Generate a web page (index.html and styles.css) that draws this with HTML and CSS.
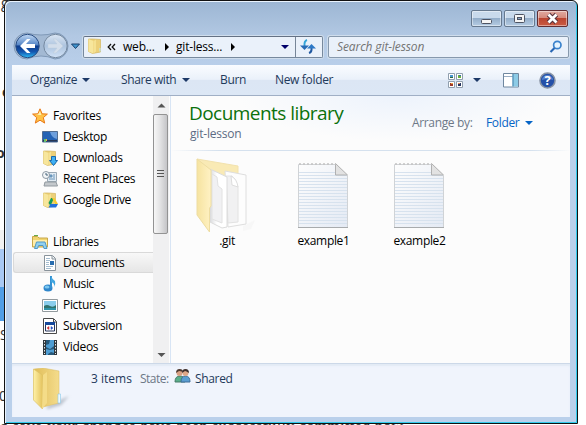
FILE: index.html
```html
<!DOCTYPE html>
<html lang="en">
<head>
<meta charset="utf-8">
<title>git-lesson</title>
<link rel="stylesheet" href="styles.css">
</head>
<body>
<div class="backdrop" aria-hidden="true">
  <span class="frag f1">g</span><span class="frag f2">o</span><span class="frag f3">o</span>
  <span class="sel s0"></span><span class="sel s1"></span><span class="sel s2"></span>
  <span class="frag f4">S</span><span class="frag f5">0</span>
  <span class="frag f6">g save your changes have been successfully committed now</span>
</div>
<main class="window">
  <div class="titlebar">
    <button class="cap" aria-label="Minimize"><svg width="31" height="17"><rect x="10.5" y="9.5" width="10" height="4" rx="1" fill="#f5f5f5" stroke="#4d5362"/></svg></button>
    <button class="cap" aria-label="Maximize"><svg width="31" height="17"><rect x="10.5" y="4.5" width="10" height="8" rx="1" fill="#f5f5f5" stroke="#4d5362"/><rect x="13.5" y="7.5" width="4" height="2" fill="#8ba6c6" stroke="#4d5362"/></svg></button>
    <button class="cap close" aria-label="Close"><svg width="31" height="17"><path d="M11.5 4.5l8 8M19.5 4.5l-8 8" stroke="#55303a" stroke-width="4.8"/><path d="M11.5 4.5l8 8M19.5 4.5l-8 8" stroke="#fff" stroke-width="2.8"/></svg></button>
  </div>
  <div class="navrow">
    <svg class="travel" width="68" height="28" viewBox="0 0 68 28">
      <defs>
        <linearGradient id="bk" x2="0" y2="1"><stop stop-color="#c0d8f4"/><stop offset=".45" stop-color="#5686c6"/><stop offset=".5" stop-color="#0d3b8c"/><stop offset=".75" stop-color="#1457b0"/><stop offset="1" stop-color="#2cbcf4"/></linearGradient>
        <linearGradient id="fw" x2="0" y2="1"><stop stop-color="#dbe6f3"/><stop offset=".5" stop-color="#adc4df"/><stop offset="1" stop-color="#d1e2f6"/></linearGradient>
      </defs>
      <path d="M14 1Q28 5 42 1A13 13 0 0 1 42 27Q28 21 14 27A13 13 0 0 1 14 1Z" fill="#a3b9d3" stroke="#8099b7"/>
      <circle cx="14.5" cy="14" r="11.7" fill="url(#bk)" stroke="#294d83"/>
      <circle cx="42.5" cy="14" r="11.7" fill="url(#fw)" stroke="#74889f"/>
      <path d="M7 14l7-7h3.500l-4.500 5h9v4h-9l4.500 5h-3.500z" fill="#fff"/>
      <path d="M50 14l-7-7h-3l4 5h-9v4h9l-4 5h3z" fill="#d3deeb" stroke="#bdcddd" stroke-width=".5"/>
      <path d="M58.500 12h8l-4 4.500z" fill="#3f94ce" stroke="#1c416d"/>
    </svg>
    <div class="address">
      <svg width="16" height="18" viewBox="0 0 16 18"><use href="#folder"/></svg>
      <svg class="chev" width="9" height="8" viewBox="0 0 9 8"><path d="M4 1L1.200 4 4 7M8 1L5.200 4 8 7" fill="none" stroke="#111" stroke-width="1.300"/></svg><span class="a1">web...</span><i class="tri"></i><span class="a2">git-less...</span><i class="tri t2"></i><i class="down navy"></i>
      <span class="refresh"><svg width="18" height="16" viewBox="0 0 18 16"><path d="M8 1Q5 2 5.500 7" fill="none" stroke="#35a5d9" stroke-width="2"/><path d="M1 6.500h9l-4.500 4.500z" fill="#286bb5"/><path d="M10 14Q13 13 12.500 9" fill="none" stroke="#2159a1" stroke-width="2"/><path d="M8 9.500h9L12.500 5z" fill="#2d79c7"/></svg></span>
    </div>
    <div class="search"><span>Search git-lesson</span><svg width="14" height="14" viewBox="0 0 14 14"><circle cx="8.300" cy="5" r="3.700" fill="#e6f4ff" stroke="#3b83cc" stroke-width="1.700"/><path d="M5.500 8L1.500 12" stroke="#2867b4" stroke-width="2.200"/></svg></div>
  </div>
  <div class="client">
    <div class="toolbar">
      <span class="c1">Organize</span><i class="down"></i><span class="c2">Share with</span><i class="down"></i><span class="c3">Burn</span><span class="c4">New folder</span>
      <svg class="views" width="15" height="15" viewBox="0 0 15 15"><path d="M.5.5h6v6h-6zM8.500.5h6v6h-6zM.5 8.500h6v6h-6zM8.500 8.500h6v6h-6z" fill="#fff" stroke="#909fae"/><path d="M2 2h3v2h-3z" fill="#4795ce"/><path d="M2 4h3v1h-3z" fill="#2c653c"/><path d="M10 2h3v3h-3z" fill="#6ab13d"/><path d="M11 2h2v1h-2z" fill="#3469b0"/><path d="M2 10h3v3h-3z" fill="#9b3829"/><path d="M3 10h2v1h-2z" fill="#f4a13b"/><path d="M10 10h3v3h-3z" fill="#26345f"/><path d="M10 10h2v1h-2z" fill="#db865d"/></svg>
      <i class="down d3"></i>
      <svg class="pane" width="16" height="15" viewBox="0 0 16 15"><path d="M.5.5h15v13.500h-15z" fill="#fff" stroke="#6f879f"/><path d="M1 3.500h9" stroke="#9aaec4"/><path d="M9.500 1h5.500v12.500h-5.500z" fill="#8ccbe6"/><path d="M10 1v12.500" stroke="#4580a9"/></svg>
      <svg class="help" width="17" height="17" viewBox="0 0 17 17"><circle cx="8.500" cy="8.500" r="7.500" fill="#2450a8" stroke="#8792a3" stroke-width="1.600"/><path d="M3 8A5.500 5 0 0 1 14 8Q9 6 3 8" fill="#5381cd"/><text x="8.500" y="13" text-anchor="middle">?</text></svg>
    </div>
    <div class="body">
      <nav class="side">
        <div class="item head"><svg viewBox="0 0 16 16"><path d="M8 .8l2.100 5 5.300.3-4.100 3.500 1.400 5.500L8 12.200l-4.700 2.900 1.400-5.500L.6 6.100l5.300-.3z" fill="#ffc247" stroke="#e87818"/><path d="M8 3l1.300 4L3 7l3-.5z" fill="#fff0ac"/></svg>Favorites</div>
        <div class="item"><svg viewBox="0 0 16 16"><path d="M.5 2.500h15v10.500h-15z" fill="#2462b4" stroke="#526d91"/><path d="M8 3h7v7Q10 9 8 3" fill="#6d9fdc"/><path d="M1 11h14v1.500H1z" fill="#273652"/><path d="M2 10h2v3H2z" fill="#62c26c"/><path d="M4 10h1v2H4z" fill="#f0b34a"/></svg>Desktop</div>
        <div class="item"><svg viewBox="0 0 16 16"><use href="#folder"/><path d="M9.500 6.500h4v4h2l-4 5-4-5h2z" fill="#3fb0f4" stroke="#1768ae"/></svg>Downloads</div>
        <div class="item"><svg viewBox="0 0 16 16"><path d="M5.500 1.500h9v9h-9z" fill="#e1ebf3" stroke="#9aa9b5"/><path d="M7 4h3v2H7zM11 4h2M11 6h2M7 8h6" fill="#739dc0" stroke="#6794bb"/><path d="M3 11h11l1.500 4H2z" fill="#c3c8cc" stroke="#929aa0"/><circle cx="4" cy="4" r="3.500" fill="#f3f6f8" stroke="#8c98a3"/><path d="M4 2v2h2" fill="none" stroke="#47647d"/></svg>Recent Places</div>
        <div class="item"><svg viewBox="0 0 16 16"><use href="#folder"/><path d="M9 6h3l-3.500 8-2-3z" fill="#179d59"/><path d="M10 6h2.500l3.500 6h-3z" fill="#f6cc32"/><path d="M8.500 12h7.500l-2 3.500H6.500z" fill="#2370dc"/></svg>Google Drive</div>
        <div class="item head libs"><svg viewBox="0 0 16 16"><path d="M.5 2.500h5l1.500 1.500h8.500v9H.5z" fill="#f0d56f" stroke="#c9a84b"/><path d="M2 1.500h4" stroke="#66a94c"/><path d="M1 6h14v6H1z" fill="#ffedaa"/><path d="M4.500 8h8.500l2 6.500h-3l-1-3H6.500l-1 3H2.500z" fill="#91d0f0" stroke="#5198c6"/></svg>Libraries</div>
        <div class="item chosen"><svg viewBox="0 0 16 16"><path d="M2.500.5h8l3 3v12h-11z" fill="#fff" stroke="#88929a"/><path d="M10 1v3h3" fill="#e7edf2" stroke="#88929a"/><path d="M4 3.500h4M4 5.500h4M4 7.500h3M4 9.500h3M4 11.500h7M4 13.500h5" stroke="#a5bdd0"/><path d="M8 6h4v4H8z" fill="#276cae"/></svg>Documents</div>
        <div class="item"><svg viewBox="0 0 16 16"><ellipse cx="6" cy="12" rx="4.500" ry="3.500" fill="#2f86cb"/><path d="M9 0v12" stroke="#3291d2" stroke-width="2"/><path d="M9 0Q10 3 13 5Q14 8 12 11Q13 7 9 6z" fill="#43a6df"/><ellipse cx="5" cy="11" rx="2.500" ry="1.500" fill="#7dc7ef"/></svg>Music</div>
        <div class="item"><svg viewBox="0 0 16 16"><path d="M.5 2.500h15v12H.5z" fill="#fff" stroke="#929a9e"/><path d="M2 4h12v9H2z" fill="#8acdec"/><path d="M2 9Q5 7 8 9T14 8v5H2z" fill="#30726d"/><path d="M2 11h12v2H2z" fill="#2e93a8"/></svg>Pictures</div>
        <div class="item"><svg viewBox="0 0 16 16"><path d="M1.500.5h10l3 3v12h-13z" fill="#fff" stroke="#4a4a4a"/><path d="M11.500 1v3h3" fill="none" stroke="#4a4a4a"/><path d="M3.500 4.500h9v8.500h-9z" fill="#fff" stroke="#26345b"/><path d="M3 4h10v3H3z" fill="#17499b"/><path d="M7 8.500L5 10l2 1.500z" fill="#cb2d35" stroke="#cb2d35" stroke-width=".5"/><path d="M9 8.500l2 1.500-2 1.500z" fill="#2851be" stroke="#2851be" stroke-width=".5"/></svg>Subversion</div>
        <div class="item"><svg viewBox="0 0 16 16"><path d="M1 1h14v15H1z" fill="#30363b"/><path d="M4 1h8v15H4z" fill="#4e9dd3"/><path d="M4 1h4l-1 4-3 1zM4 8l4 2 4-3v3l-4 1-4-1zM6 15l3-2 3 1v2H6z" fill="#275879"/><path d="M2.500 2v13M13.500 2v13" stroke="#e1e9ed" stroke-dasharray="1.500 1.500"/></svg>Videos</div>
      </nav>
      <div class="scroll"><svg width="16" height="268"><path d="M4.500 11.500l4-4 4 4z" fill="#555"/><rect x=".5" y="18.500" width="14" height="119" rx="1.500" fill="url(#thumb)" stroke="#939393"/><path d="M4 74.500h7M4 77.500h7M4 80.500h7" stroke="#555"/><path d="M4.500 257l4 4 4-4z" fill="#555"/><defs><linearGradient id="thumb"><stop stop-color="#f8f8f8"/><stop offset=".45" stop-color="#e4e4e5"/><stop offset="1" stop-color="#c2c2c5"/></linearGradient></defs></svg></div>
      <section class="content">
        <header>
          <div><h1>Documents library</h1><p>git-lesson</p></div>
          <div class="arrange"><span class="g1">Arrange by:</span><span class="g2">Folder</span><i class="down blue"></i></div>
        </header>
        <div class="files">
          <figure class="dir"><svg width="62" height="78" viewBox="0 0 62 78">
            <defs><linearGradient id="flap"><stop stop-color="#f6e3a0"/><stop offset="1" stop-color="#fff2c4"/></linearGradient><linearGradient id="paper"><stop stop-color="#d9dadd"/><stop offset=".4" stop-color="#fff"/></linearGradient></defs>
            <path d="M48 71l12-6-4 9-8 2z" fill="#f7f7f7"/>
            <path d="M2 4l41 7v12H14z" fill="#f9eab5" stroke="#f2e2ae"/>
            <path d="M30 16l21 4v49l-18 3z" fill="#fdfdfd" stroke="#dedede"/><path d="M31 21h6l3 3 3 8v35l-10 1z" fill="#f1f1f2" stroke="#e2e2e2"/><path d="M36 21l1 9 6 2q-1-8-7-11z" fill="#fff" stroke="#ddd"/>
            <path d="M15 14l17 8v50l-5 1-12-6z" fill="url(#paper)" stroke="#dcdcdc"/><path d="M17 19l5 3 1 9 4 3v34l-10-4z" fill="#f1f1f3" stroke="#e2e2e2"/>
            <path d="M2 4l14 11v36l-1.500 2v24L2 60z" fill="url(#flap)" stroke="#eedda2"/>
          </svg><figcaption>.git</figcaption></figure>
          <figure><svg width="54" height="78" viewBox="0 0 54 78"><use href="#note"/></svg><figcaption>example1</figcaption></figure>
          <figure><svg width="54" height="78" viewBox="0 0 54 78"><use href="#note"/></svg><figcaption>example2</figcaption></figure>
        </div>
      </section>
    </div>
    <footer>
      <svg width="42" height="45" viewBox="0 0 42 45"><defs><linearGradient id="gold"><stop stop-color="#fff2a9"/><stop offset="1" stop-color="#e4c35e"/></linearGradient><linearGradient id="inner"><stop stop-color="#e0bd58"/><stop offset="1" stop-color="#f4dc8c"/></linearGradient><filter id="soft"><feGaussianBlur stdDeviation="1.500"/></filter></defs><path d="M15 38L37 28l-8 9-14 4z" fill="#b9c0cb" filter="url(#soft)"/><path d="M2 1l9-1 16 3v32l-16 4z" fill="url(#inner)" stroke="#d9bc62" stroke-width=".5"/><path d="M1.500 1l9 6v34L1.500 32z" fill="url(#gold)" stroke="#ddc264" stroke-width=".7"/><path d="M11 7l4-3v31l-5 6z" fill="#f4dc88"/><path d="M26 26h2.500v9H26z" fill="#eefbff" stroke="#8ac7ea" stroke-width=".6"/></svg>
      <span class="b1">3 items</span><span class="b2">State:</span>
      <svg class="people" width="17" height="16" viewBox="0 0 17 16"><path d="M1 14q0-6 5-6t5 6z" fill="#5aae8b" stroke="#457964"/><circle cx="5.500" cy="5" r="3" fill="#d9a083"/><path d="M2 5Q2 1 5.500 1T9 4Q6 3 5 3z" fill="#4e3930"/><path d="M7 14q0-6 4.500-6t4.500 6z" fill="#5b9ed1" stroke="#3e6d99"/><circle cx="11.500" cy="5" r="3" fill="#dfa787"/><path d="M8 5Q8 1 11.500 1T15 5Q12 3 11 3z" fill="#3f302d"/></svg><span class="b3">Shared</span>
    </footer>
  </div>
</main>
<svg class="defs" width="0" height="0"><defs>
  <g id="folder"><path d="M1.500 1h5l7 .5v12.500l-8 1.500-4-2z" fill="#ecd079" stroke="#d3b65e" stroke-width=".7"/><path d="M1.500 1l5 2v12.500l-5-2z" fill="#f7e69c"/><path d="M7 3l2-1.500v12L7 15z" fill="#f5e192"/><path d="M12.500 10h1v3.500h-1z" fill="#b9e9fa"/></g>
  <linearGradient id="sheet" x2="1" y2="1"><stop stop-color="#fdfdfd"/><stop offset="1" stop-color="#e4eaf4"/></linearGradient>
  <g id="note"><path d="M2.500 9.500h37L51.500 21v51.500h-49z" fill="url(#sheet)" stroke="#d0d3d6"/><path d="M3 17.500h37M3 20.500h48M3 23.500h48M3 26.500h48M3 29.500h48M3 32.500h48M3 35.500h48M3 38.500h48M3 41.500h48M3 44.500h48M3 47.500h48M3 50.500h48M3 53.500h48M3 56.500h48M3 59.500h48M3 62.500h48M3 65.500h48M3 68.500h48" stroke="#d7e2ee"/><path d="M39.500 8.500v11.500h12z" fill="#e2e2e2" stroke="#b0b0b0"/><path d="M3 9h37" stroke="#c2c2c2" stroke-width="1.500" stroke-dasharray="2 2"/><path d="M2 72.500h50" stroke="#a8abad"/></g>
</defs></svg>
</body>
</html>
```
FILE: styles.css
```css
* { box-sizing: border-box; }
body { margin: 0; width: 586px; height: 425px; overflow: hidden; background: #fff; position: relative; font: 12px/16px "Open Sans", "Noto Sans", sans-serif; color: #000; letter-spacing: -.33px; }
.backdrop { position: absolute; inset: 0; overflow: hidden; }
.frag, .sel { position: absolute; white-space: nowrap; color: #333; font-size: 14px; }
.f1 { left: 1px; top: -5px; }
.f2 { left: 2px; top: 84px; font-weight: bold; }
.f3 { left: -4px; top: 145px; font-weight: bold; }
.f4 { left: 0; top: 327px; }
.f5 { left: -1px; top: 388px; }
.f6 { left: 0; top: 419px; font-size: 16px; letter-spacing: .35px; font-family: "Liberation Serif", serif; }
.sel { left: 0; width: 5px; }
.s0 { top: 230px; height: 19px; background: #f1f1f1; }
.s1 { top: 249px; height: 38px; background: #a9c9f3; }
.s2 { top: 287px; height: 34px; background: #519ee5; }
.window { position: relative; width: 574px; height: 424px; margin-left: 4px; padding: 0 7px; border: 1px solid #111; border-radius: 6px 6px 0 0; background: linear-gradient(#9cb6d3 0, #b2c8e3 35px, #bad0eb 70px, #bad0eb); box-shadow: inset 1px 1px #e9f3fd, inset -1px -1px #31cbed; }
.titlebar { height: 30px; display: flex; justify-content: flex-end; gap: 2px; padding: 9px 2px 0 0; }
.cap { width: 31px; height: 17px; padding: 0; border: 1px solid #66798f; border-radius: 2px; background: linear-gradient(#c9daec 0 45%, #94aeca 50%, #b5cce3); box-shadow: inset 0 0 0 1px #ffffff70; overflow: hidden; }
.cap svg { display: block; margin: -1px; }
.close { border-color: #622d32; background: linear-gradient(#e0aaa1 0, #d68a7c 45%, #bb4530 50%, #ca5b44); }
.navrow { height: 34px; display: flex; align-items: flex-start; }
.travel { margin: 1px 1px 0 1px; flex: none; }
.address { height: 22px; width: 240px; margin: 5px 5px 0 1px; border: 1px solid #77899d; border-radius: 2px; background: #eaf1fa; box-shadow: 0 0 0 1px #cfddec; display: flex; align-items: center; padding-left: 3px; white-space: nowrap; }
.address, .search { border-top-color: #647184; }
.address svg { flex: none; }
.address .chev { margin: -1px 0 0 4px; }
.a1 { width: 42px; margin-left: 7px; letter-spacing: -.2px; }
.a2 { width: 48px; margin-left: 7px; letter-spacing: -.2px; }
.tri { border: solid transparent; border-width: 4px 0 4px 4px; border-left-color: #000; }
.t2 { margin-left: 7px; }
.down { border: solid transparent; border-width: 4px 4px 0; border-top-color: #1d3967; flex: none; }
.navy { border-top-color: #00006a; margin-left: 46px; }
.refresh { margin-left: 6px; width: 24px; height: 20px; border-left: 1px solid #778698; display: grid; place-items: center; }
.search { height: 22px; width: 241px; margin-top: 5px; padding: 0 5px 0 8px; border: 1px solid #8799ad; border-radius: 2px; background: #eaf1fa; display: flex; align-items: center; justify-content: space-between; color: #747474; font-style: italic; letter-spacing: -.1px; box-shadow: 0 0 0 1px #cfddec; }
.client { height: 352px; width: 558px; background: #fcfcfc; }
.toolbar { height: 31px; padding-left: 18px; display: flex; align-items: center; color: #1e395b; background: linear-gradient(#fafcff 0, #eaf1fa 48%, #dce6f4 50%, #dce7f5); border-bottom: 1px solid #a0afc5; white-space: nowrap; }
.c1 { width: 52px; }
.c2 { width: 61px; margin-left: 31px; }
.c3 { width: 55px; margin-left: 30px; }
.c4 { width: 173px; }
.c1, .c2 { letter-spacing: -.4px; }
.d3 { margin-left: 10px; }
.pane { margin-left: 22px; }
.help { margin-left: 20px; }
.help text { fill: #fff; font: bold 13px "Open Sans", sans-serif; }
.body { height: 267px; display: flex; }
.side { width: 141px; padding-top: 9px; flex: none; }
.item { height: 21px; display: flex; align-items: center; gap: 5px; padding-left: 30px; white-space: nowrap; }
.item svg { width: 16px; height: 16px; flex: none; }
.head { padding-left: 20px; }
.libs { margin-top: 21px; }
.chosen { border: 1px solid #d9d9d9; border-right: 0; border-radius: 3px 0 0 3px; margin-left: 1px; padding-left: 28px; background: linear-gradient(#f8f8f8, #e6e6e6); }
.scroll { width: 16px; height: 267px; flex: none; background: #f0f0f1; overflow: hidden; }
.content { flex: 1; border-left: 1px solid #d8e5f5; margin-left: 1px; background: #fcfcfc; }
.content header { height: 55px; padding: 4px 37px 0 18px; display: flex; justify-content: space-between; background: radial-gradient(ellipse 160px 45px at 57% 0, #edf3fc, #fcfcfc); border-bottom: 1px solid; border-image: linear-gradient(90deg, transparent, #d5e1ee 12%, #d5e1ee 90%, transparent) 1; }
h1 { margin: 0; font: 19px/26px "Open Sans", sans-serif; letter-spacing: -.55px; color: #0b710b; white-space: nowrap; }
p { margin: 1px 0 0 1px; line-height: 14px; color: #5c6c84; letter-spacing: -.2px; }
.arrange { display: flex; align-items: center; height: 16px; margin-top: 15px; color: #6d7887; }
.g1 { width: 74px; letter-spacing: -.35px; }
.g2 { width: 39px; color: #0765c6; }
.blue { border-top-color: #0765c6; }
.files { display: flex; padding: 4px 0 0 8px; }
figure { margin: 0; width: 96px; text-align: center; }
figure svg { display: block; margin: 0 auto; }
.dir svg { margin-left: 16px; }
.dir figcaption { padding-right: 1px; }
figcaption { padding-left: 1px; }
footer { height: 54px; background: #f0f4fc; border-top: 1px solid #ccd8e8; box-shadow: inset 0 2px 2px #e2eaf5; display: flex; align-items: flex-start; padding: 3px 0 0 18px; color: #1e395b; white-space: nowrap; }
footer > svg:first-child { margin: 1px 0 0 2px; }
footer span { margin-top: 4px; }
.b1 { margin-left: 17px; width: 49px; letter-spacing: 0; }
.b2 { width: 34px; color: #6d7887; letter-spacing: -.5px; }
.people { margin-top: 1px; }
.b3 { margin-left: 4px; }
.defs { position: absolute; }
```
